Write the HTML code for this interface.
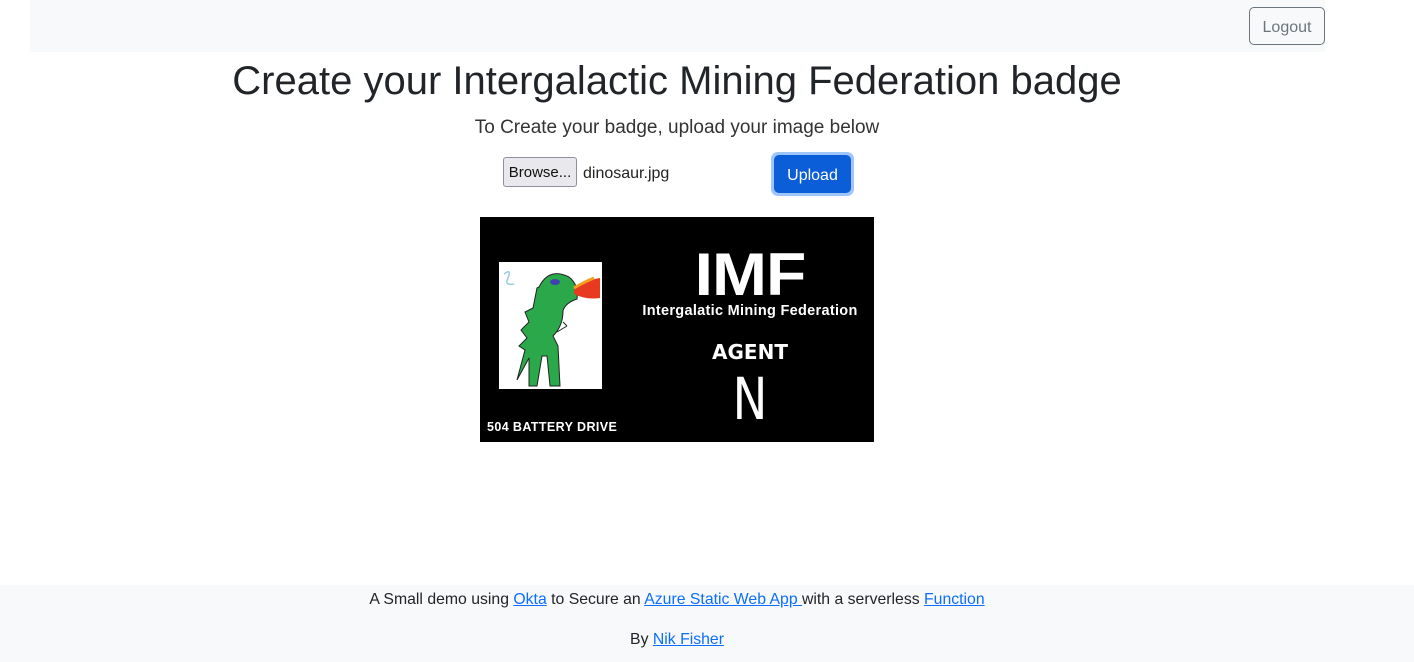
<!DOCTYPE html>
<html><head><meta charset="utf-8"><style>
*{box-sizing:border-box;margin:0;padding:0}
body{width:1414px;height:662px;background:#fff;font-family:"Liberation Sans",sans-serif;color:#212529;position:relative;overflow:hidden}
.nav{position:absolute;left:30px;top:0;width:1295px;height:52px;background:#f8f9fa}
.logout{position:absolute;left:1249px;top:7px;width:76px;height:38px;border:1px solid #6c757d;border-radius:5px;color:#6c757d;font-size:16px;line-height:40px;text-align:center}
h1{position:absolute;left:0;width:1354px;top:57px;text-align:center;font-weight:400;font-size:40px;line-height:48px}
.sub{position:absolute;left:0;width:1354px;top:117px;text-align:center;font-size:19px;color:#333;font-weight:300}
.browse{position:absolute;left:503px;top:157px;width:74px;height:30px;background:#e9e9ed;border:1px solid #8f8f9d;border-radius:3px;font-size:15px;line-height:30px;text-align:center;color:#111}
.fname{position:absolute;left:583px;top:165px;font-size:16px;color:#222}
.upl{position:absolute;left:771px;top:152px;width:83px;height:44px;border-radius:7px;background:#9ec5fe}
.upl div{position:absolute;left:3px;top:3px;width:77px;height:38px;background:#0b5ed7;border-radius:5px;color:#fff;font-size:16px;line-height:42px;text-align:center}
.badge{position:absolute;left:480px;top:217px;width:394px;height:225px;background:#000;color:#fff}
.badge .t{position:absolute;text-align:center;font-weight:bold;white-space:nowrap}
.foot{position:absolute;left:0;top:585px;width:1414px;height:77px;background:#f8f9fa;font-size:15.8px;text-align:center;color:#212529}
a{color:#0d6efd;text-decoration:underline}
</style></head><body>
<div class="nav"></div>
<div class="logout">Logout</div>
<h1>Create your Intergalactic Mining Federation badge</h1>
<div class="sub">To Create your badge, upload your image below</div>
<div class="browse">Browse...</div>
<div class="fname">dinosaur.jpg</div>
<div class="upl"><div>Upload</div></div>
<div class="badge">
<svg style="position:absolute;left:19px;top:45px" width="103" height="127" viewBox="0 0 103 127">
<rect width="103" height="127" fill="#fff"/>
<path d="M5 12 q8 -6 4 4 q-4 8 6 6" stroke="#9cd" fill="none" stroke-width="1.5"/>
<path d="M40 25 q10 -20 30 -10 q10 8 8 22 q-12 4 -14 12 q0 15 -10 25 l5 10 l2 40 l-10 0 l-3 -30 l-5 0 l-5 30 l-8 0 l0 -28 l-12 22 l8 -30 l-6 -4 l8 -8 l-6 -8 l8 -8 l-4 -10 l8 -4 q2 -10 4 -20 z" fill="#2aa84a" stroke="#222" stroke-width="1"/>
<ellipse cx="56" cy="20" rx="5" ry="3" fill="#4040b0"/>
<path d="M75 28 q12 -10 26 -12 l0 20 q-14 2 -26 -4 z" fill="#e83a20"/>
<path d="M75 26 q10 -6 20 -10" stroke="#f7a020" stroke-width="3" fill="none"/>
<path d="M58 70 l10 -6 m-4 -4 l4 4" stroke="#222" fill="none"/>
</svg>
<div class="t" style="left:170px;width:200px;top:24px;font-size:66px;line-height:66px;letter-spacing:-1px;transform:scaleY(0.92)">IMF</div>
<div class="t" style="left:150px;width:240px;top:86px;font-size:14.5px;letter-spacing:0.3px">Intergalatic Mining Federation</div>
<div class="t" style="left:200px;width:140px;top:123px;font-size:20px;font-family:'DejaVu Sans',sans-serif">AGENT</div>
<div class="t" style="left:220px;width:100px;top:150px;font-size:58px;font-weight:400;line-height:64px;font-family:'DejaVu Sans',sans-serif;transform:scaleX(0.8)">N</div>
<div class="t" style="left:7px;top:203px;font-size:12.5px;letter-spacing:0.4px">504 BATTERY DRIVE</div>
</div>
<div class="foot">
<div style="position:absolute;left:0;width:1354px;top:6px">A Small demo using <a>Okta</a> to Secure an <a>Azure Static Web App </a>with a serverless <a>Function</a></div>
<div style="position:absolute;left:0;width:1354px;top:46px">By <a>Nik Fisher</a></div>
</div>
</body></html>
